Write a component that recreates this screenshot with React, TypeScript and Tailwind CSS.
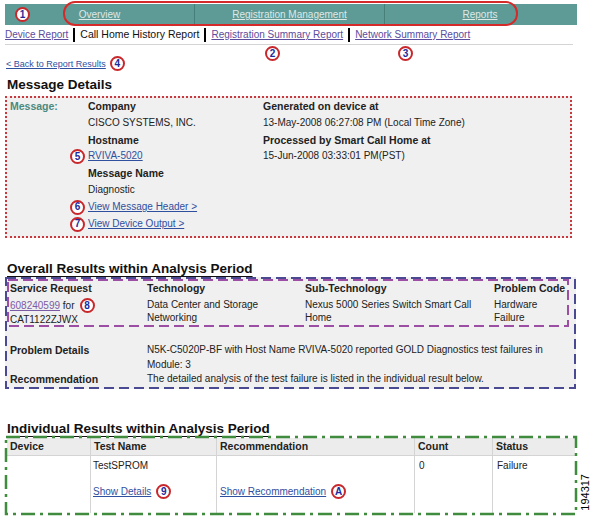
function Callout({ n, className = "" }: { n: string; className?: string }) {
  return (
    <span
      className={`inline-flex h-[15px] w-[15px] shrink-0 items-center justify-center rounded-full border-2 border-[#c8282c] bg-white text-[10px] font-bold leading-none text-[#1b2a9c] ${className}`}
    >
      {n}
    </span>
  );
}

function DashBorder({ color, dash, width = 2 }: { color: string; dash: string; width?: number }) {
  return (
    <svg className="pointer-events-none absolute inset-0 h-full w-full overflow-visible">
      <rect x="1" y="1" width="100%" height="100%" className="[width:calc(100%-2px)] [height:calc(100%-2px)]" fill="none" stroke={color} strokeWidth={width} strokeDasharray={dash} />
    </svg>
  );
}

const navItems = ["Overview", "Registration Management", "Reports"];

const reportLinks = [
  { label: "Device Report", active: false },
  { label: "Call Home History Report", active: true },
  { label: "Registration Summary Report", active: false },
  { label: "Network Summary Report", active: false },
];

export default function App() {
  return (
    <div className="relative h-[519px] w-[593px] overflow-hidden bg-white font-['Liberation_Sans',Arial,sans-serif] text-[10px] text-[#222]">
      <div className="ml-[5px] w-[572px] pt-[4px]">
        {/* Barra de navegación */}
        <div className="relative flex h-[21px] bg-[#5f9b96]">
          {navItems.map((item, i) => (
            <div
              key={item}
              className={`flex w-[190px] items-center justify-center ${i < 2 ? "border-r border-[#467f7a]" : ""}`}
            >
              <span className="text-[10px] text-[#dde9e7] underline">{item}</span>
            </div>
          ))}
          <div className="pointer-events-none absolute -top-[3px] -bottom-[1px] left-[58px] w-[455px] rounded-[12px] border-2 border-[#d42a2a]" />
          <Callout n="1" className="absolute left-[10px] top-[3px]" />
        </div>

        {/* Enlaces de informes */}
        <div className="flex h-[20px] w-[568px] items-center border-b border-[#d4d4d4]">
          {reportLinks.map((l, i) => (
            <div key={l.label} className="flex items-center">
              {i > 0 && <span className="mx-[5px] h-[14px] w-[2px] bg-black" />}
              {l.active ? (
                <span className="text-[10.5px] text-[#111]">{l.label}</span>
              ) : (
                <span className="text-[10px] text-[#5b4c9e] underline">{l.label}</span>
              )}
            </div>
          ))}
        </div>

        {/* Volver */}
        <div className="relative h-[27px] pl-[1px] pt-[11px]">
          <div className="flex items-center gap-[4px]">
            <span className="text-[9px] leading-[12px] text-[#2f4f9f] underline">&lt; Back to Report Results</span>
            <Callout n="4" />
          </div>
          <Callout n="2" className="absolute left-[260px] top-[1px]" />
          <Callout n="3" className="absolute left-[393px] top-[1px]" />
        </div>

        {/* Message Details */}
        <h2 className="mt-[5px] pl-[2px] text-[13.5px] font-bold leading-[16px] text-[#111]">Message Details</h2>
        <div className="mt-[3px] flex h-[142px] w-[567px] border-2 border-dotted border-[#c9383c] bg-[#f0f0f0] leading-[16.8px]">
          <div className="w-[81px] pl-[3px] text-[10.5px] font-bold text-[#4a8a80]">Message:</div>
          <div className="w-[175px]">
            <div className="text-[10.5px] font-bold">Company</div>
            <div>CISCO SYSTEMS, INC.</div>
            <div className="text-[10.5px] font-bold">Hostname</div>
            <div className="relative">
              <Callout n="5" className="absolute -left-[18px] top-[1px]" />
              <span className="text-[#2f4f9f] underline">RVIVA-5020</span>
            </div>
            <div className="text-[10.5px] font-bold">Message Name</div>
            <div>Diagnostic</div>
            <div className="relative">
              <Callout n="6" className="absolute -left-[18px] top-[1px]" />
              <span className="text-[#2f4f9f] underline">View Message Header &gt;</span>
            </div>
            <div className="relative">
              <Callout n="7" className="absolute -left-[18px] top-[1px]" />
              <span className="text-[#2f4f9f] underline">View Device Output &gt;</span>
            </div>
          </div>
          <div>
            <div className="text-[10.5px] font-bold">Generated on device at</div>
            <div>13-May-2008 06:27:08 PM (Local Time Zone)</div>
            <div className="text-[10.5px] font-bold">Processed by Smart Call Home at</div>
            <div>15-Jun-2008 03:33:01 PM(PST)</div>
          </div>
        </div>

        {/* Overall Results */}
        <h2 className="mt-[23px] pl-[2px] text-[13.5px] font-bold leading-[16px] text-[#111] underline decoration-1 underline-offset-[3px]">
          Overall Results within Analysis Period
        </h2>
        <div className="relative h-[112px] w-[571px] bg-[#f0f0f0] p-[2px]">
          <DashBorder color="#4a4a92" dash="10 5" />
          <div className="relative mr-[5px] h-[48px] p-[2px]">
            <DashBorder color="#9b4ea3" dash="10 5" />
            <div className="flex pl-[1px] text-[10.5px] font-bold leading-[14px]">
              <div className="w-[137px]">Service Request</div>
              <div className="w-[158px]">Technology</div>
              <div className="w-[189px]">Sub-Technology</div>
              <div>Problem Code</div>
            </div>
            <div className="mt-[3px] flex pl-[1px] leading-[13px]">
              <div className="w-[137px]">
                <div className="flex items-center gap-[4px]">
                  <span>
                    <span className="text-[#7b5aa6] underline">608240599</span> for
                  </span>
                  <Callout n="8" className="ml-[1px]" />
                </div>
                <div>CAT1122ZJWX</div>
              </div>
              <div className="w-[158px]">
                Data Center and Storage
                <br />
                Networking
              </div>
              <div className="w-[189px]">
                Nexus 5000 Series Switch Smart Call
                <br />
                Home
              </div>
              <div>
                Hardware
                <br />
                Failure
              </div>
            </div>
          </div>
          <div className="mt-[16px] flex pl-[3px] leading-[14.5px]">
            <div className="w-[137px] text-[10.5px] font-bold">Problem Details</div>
            <div>
              N5K-C5020P-BF with Host Name RVIVA-5020 reported GOLD Diagnostics test failures in
              <br />
              Module: 3
            </div>
          </div>
          <div className="flex pl-[3px] leading-[14.5px]">
            <div className="w-[137px] text-[10.5px] font-bold">Recommendation</div>
            <div>The detailed analysis of the test failure is listed in the individual result below.</div>
          </div>
        </div>

        {/* Individual Results */}
        <h2 className="mt-[32px] pl-[2px] text-[13.5px] font-bold leading-[16px] text-[#111] underline decoration-1 underline-offset-[3px]">
          Individual Results within Analysis Period
        </h2>
        <div className="relative -mt-[1px] h-[79px] w-[572px] p-[2px]">
          <DashBorder color="#3f8c3f" dash="14 5 3 5" width={2.5} />
          <div className="grid h-full grid-cols-[84px_126px_198px_78px_1fr] grid-rows-[18px_1fr]">
            {["Device", "Test Name", "Recommendation", "Count", "Status"].map((h, i) => (
              <div
                key={h}
                className={`flex items-center border-b border-[#d4d4d4] bg-[#ececec] pl-[3px] text-[10.5px] font-bold ${i < 4 ? "border-r" : ""}`}
              >
                {h}
              </div>
            ))}
            <div className="border-r border-[#d4d4d4]" />
            <div className="border-r border-[#d4d4d4] pl-[2px] pt-[3px] leading-[13px]">
              <div>TestSPROM</div>
              <div className="mt-[12px] flex items-center gap-[5px]">
                <span className="text-[#2f4f9f] underline">Show Details</span>
                <Callout n="9" />
              </div>
            </div>
            <div className="border-r border-[#d4d4d4] pl-[3px] pt-[28px] leading-[13px]">
              <div className="flex items-center gap-[5px]">
                <span className="text-[#2f4f9f] underline">Show Recommendation</span>
                <Callout n="A" />
              </div>
            </div>
            <div className="border-r border-[#d4d4d4] pl-[4px] pt-[3px] leading-[13px]">0</div>
            <div className="pl-[4px] pt-[3px] leading-[13px]">Failure</div>
          </div>
        </div>
      </div>

      <div className="absolute left-[580px] top-[474px] text-[11px] leading-[11px] text-black [writing-mode:vertical-rl] rotate-180">
        194317
      </div>
    </div>
  );
}
